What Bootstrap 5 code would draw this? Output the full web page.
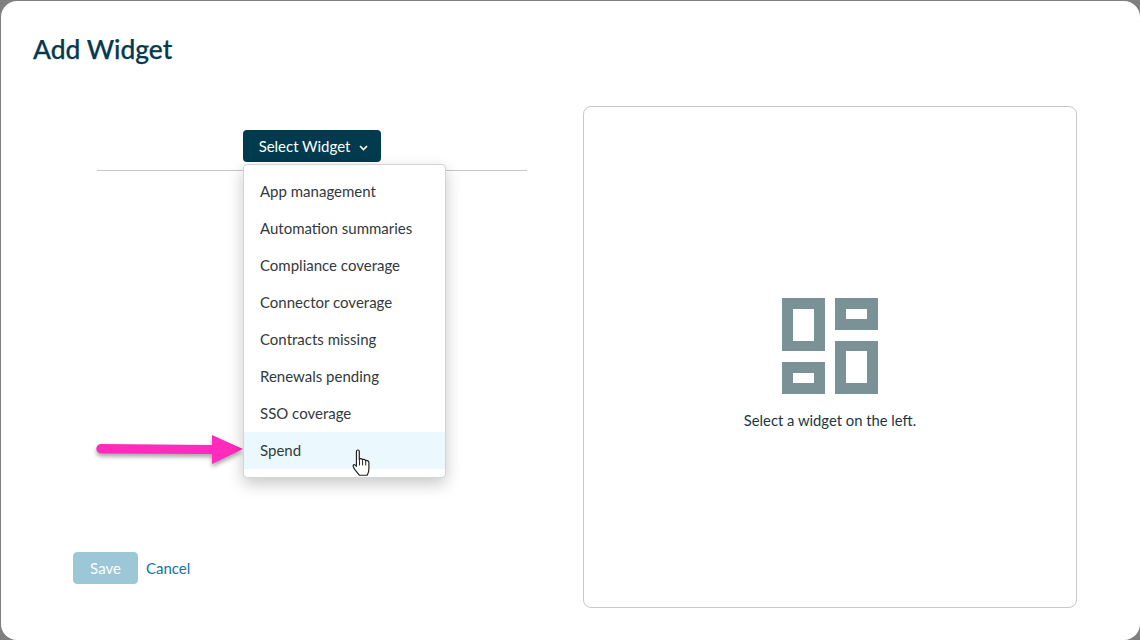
<!DOCTYPE html>
<html lang="en">

<head>
    <meta charset="UTF-8">
    <meta name="viewport" content="width=device-width, initial-scale=1.0">
    <title>Add Widget</title>

    <link href="https://cdn.jsdelivr.net/npm/bootstrap@5.3.3/dist/css/bootstrap.min.css" rel="stylesheet">
    <script src="https://cdn.jsdelivr.net/npm/bootstrap@5.3.3/dist/js/bootstrap.bundle.min.js"></script>

    <style>
        html, body { height: 100%; }
        body {
            background: #7f7f7f;
            font-family: Lato, "Liberation Sans", sans-serif;
            font-size: 15px;
            color: #21343b;
            overflow: hidden;
        }
        .dialog-box {
            height: 639px;
            margin: 1px 0 0 1px;
            background: #fff;
            border-radius: 16px;
            position: relative;
        }
        .dialog-title {
            font-size: 26.4px;
            line-height: 32px;
            font-weight: 500;
            color: #05394d;
            margin: 0;
            padding: 32px 0 0 32px;
            height: 105px;
            -webkit-text-stroke: 0.25px #05394d;
        }
        .dialog-cols { padding: 0 63px 0 72px; gap: 32px; height: 502px; }
        .left-col { width: 478px; padding: 24px 0; }
        .select-wrap { position: relative; }
        .select-btn {
            background: #023a4e;
            color: #fff;
            border: 0;
            border-radius: 4px;
            font-size: 15px;
            line-height: 20px;
            height: 32px;
            width: 138px;
            padding: 0 0 0 3px;
            letter-spacing: -.03px;
        }
        .select-btn:hover, .select-btn:active { background: #023a4e !important; color: #fff !important; }
        .select-btn::after { display: none; }
        .select-btn svg { margin-left: 9px; vertical-align: 1px; }
        .select-menu {
            position: absolute;
            top: 34px;
            left: 0;
            width: 203px;
            padding: 8px 0;
            margin: 0;
            font-size: 15px;
            border: 1px solid #d4d4d4;
            border-radius: 4px;
            box-shadow: 0 6px 16px rgba(0, 0, 0, .22);
            z-index: 5;
        }
        .select-menu .dropdown-item {
            padding: 0 16px;
            height: 37px;
            line-height: 37px;
            color: #33393c;
        }
        .select-menu .dropdown-item.hovered { background: #ebf9fe; }
        .left-rule { height: 1px; background: #c8c8c8; margin: 8px 24px 0; }
        .left-foot { gap: 8px; }
        .save-btn {
            --bs-btn-disabled-bg: #9bc7d6;
            --bs-btn-disabled-color: #fff;
            --bs-btn-disabled-border-color: #9bc7d6;
            --bs-btn-disabled-opacity: 1;
            width: 65px;
            height: 32px;
            padding: 0;
            font-size: 15px;
            border-radius: 4px;
        }
        .cancel-link { color: #12769b; text-decoration: none; }
        .preview-panel {
            width: 494px;
            border: 1px solid #c8c8c8;
            border-radius: 8px;
            padding-top: 13px;
        }
        .preview-panel p { margin: 16px 0 0; line-height: 20px; color: #1d3641; font-size: 14.8px; }
        .pink-arrow {
            position: absolute;
            left: 90px;
            top: 426px;
            filter: drop-shadow(0 3px 2px rgba(0, 0, 0, .35));
        }
        .hand-cursor { position: absolute; left: 350px; top: 447px; z-index: 6; }
    </style>
</head>

<body>
    <div class="dialog-box d-flex flex-column">
        <h1 class="dialog-title">Add Widget</h1>

        <div class="dialog-cols d-flex">
            <div class="left-col d-flex flex-column">
                <div class="d-flex justify-content-center">
                    <div class="select-wrap dropdown">
                        <button type="button" class="btn select-btn dropdown-toggle">Select Widget<svg width="9" height="6" viewBox="0 0 9 6"><path d="M1 1 4.5 4.5 8 1" fill="none" stroke="#fff" stroke-width="1.7"/></svg></button>
                        <ul class="dropdown-menu show select-menu">
                            <li><a class="dropdown-item" href="#">App management</a></li>
                            <li><a class="dropdown-item" href="#">Automation summaries</a></li>
                            <li><a class="dropdown-item" href="#">Compliance coverage</a></li>
                            <li><a class="dropdown-item" href="#">Connector coverage</a></li>
                            <li><a class="dropdown-item" href="#">Contracts missing</a></li>
                            <li><a class="dropdown-item" href="#">Renewals pending</a></li>
                            <li><a class="dropdown-item" href="#">SSO coverage</a></li>
                            <li><a class="dropdown-item hovered" href="#">Spend</a></li>
                        </ul>
                    </div>
                </div>
                <div class="left-rule"></div>
                <div class="left-foot d-flex align-items-center mt-auto">
                    <button type="button" class="btn save-btn" disabled>Save</button>
                    <a href="#" class="cancel-link">Cancel</a>
                </div>
            </div>

            <div class="preview-panel d-flex flex-column align-items-center justify-content-center">
                <svg width="96" height="96" viewBox="0 0 96 96">
                    <path fill="#7a9196" fill-rule="evenodd" d="M0 0H43V53H0ZM11 11V43H32V11ZM53 0H96V32H53ZM64 11V21H85V11ZM53 43H96V96H53ZM64 53V85H85V53ZM0 64H43V96H0ZM11 75V85H32V75Z"/>
                </svg>
                <p>Select a widget on the left.</p>
            </div>
        </div>

        <!-- annotation over the page -->
        <svg class="pink-arrow" width="156" height="42" viewBox="0 0 156 42">
            <path fill="#ff2bbd" d="M10 17 121 18V8L152 22 121 37V27L10 26.5A4.75 4.75 0 0 1 10 17Z"/>
        </svg>
        <svg class="hand-cursor" width="24" height="30" viewBox="0 0 22 27.5">
            <path fill="#fff" stroke="#222" stroke-width="1.1" stroke-linejoin="round" d="M5 3.2C5 1.4 7.6 1.4 7.6 3.2V10.5C8 9.5 10.3 9.5 10.5 11 11 10 13.2 10.2 13.4 11.8 14 11 16.4 11.4 16.4 13.2V19C16.4 22 15.5 23.5 14.8 25H7.8L3.4 19.5C2.4 18 1.5 16.8 2 15.8 2.6 14.8 4 15.2 5 16.8Z"/>
            <path fill="none" stroke="#222" stroke-width=".9" d="M7.8 11V16M10.6 11.2V16M13.5 12V16"/>
        </svg>
    </div>
</body>

</html>
